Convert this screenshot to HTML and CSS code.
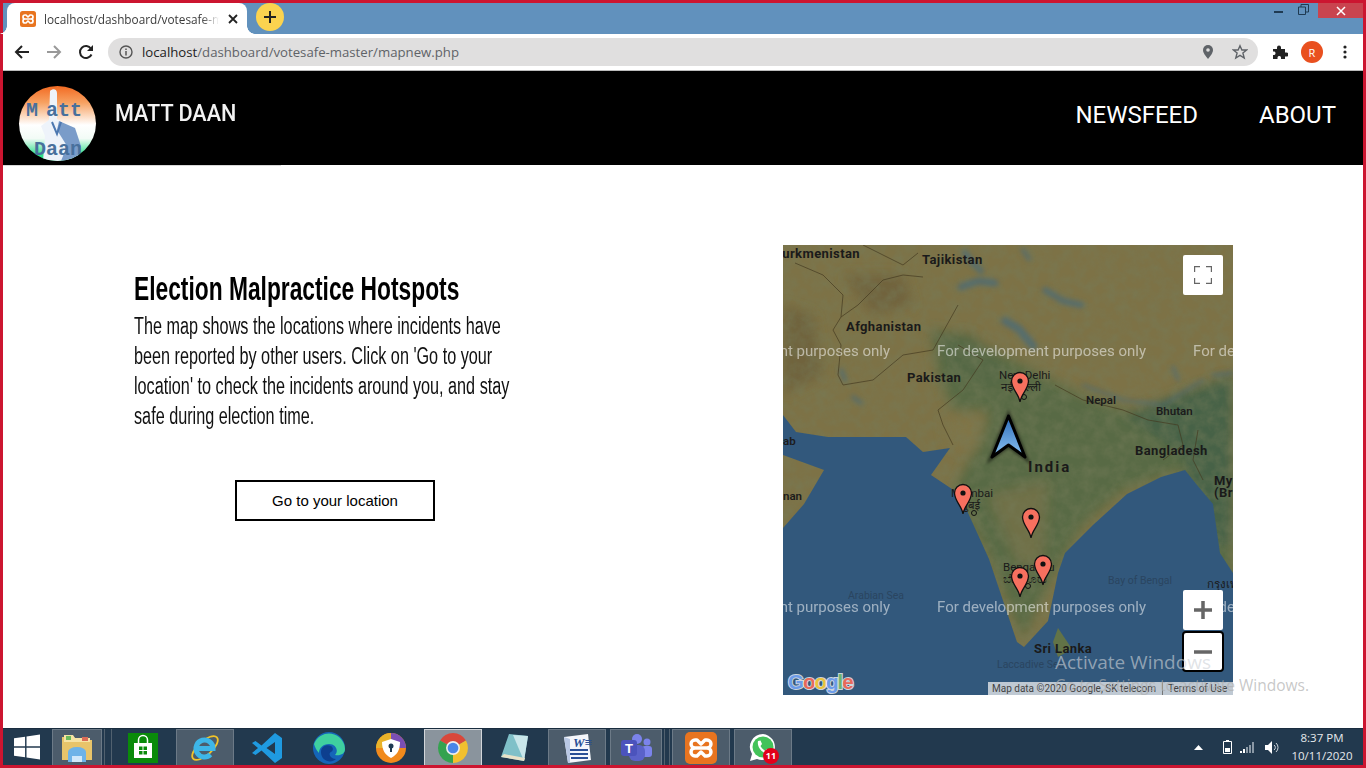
FILE: index.html
```html
<!DOCTYPE html>
<html lang="en">
<head>
<meta charset="utf-8">
<title>Matt Daan</title>
<link rel="stylesheet" href="styles.css">
</head>
<body>
<svg class="defs" width="0" height="0" aria-hidden="true">
  <symbol id="xampp" viewBox="0 0 16 16">
    <rect width="16" height="16" rx="2.5" fill="#e8741f"/>
    <path d="M8 8H5A2 2 0 0 1 5 4H6L8 6L10 4H11A2 2 0 0 1 11 8H8H5A2 2 0 0 0 5 12H6L8 10L10 12H11A2 2 0 0 0 11 8" fill="none" stroke="#fff" stroke-width="1.7" stroke-linejoin="round"/>
  </symbol>
</svg>
<div class="frame">
  <div class="tabstrip">
    <div class="tab">
      <svg class="favicon" width="16" height="16"><use href="#xampp"/></svg>
      <span class="tab-title">localhost/dashboard/votesafe-master/mapnew.php</span>
      <svg class="tab-close" width="10" height="10" viewBox="0 0 10 10"><path d="M1 1L9 9M9 1L1 9" stroke="#222" stroke-width="1.8"/></svg>
    </div>
    <div class="newtab"><svg width="14" height="14" viewBox="0 0 14 14"><path d="M7 1V13M1 7H13" stroke="#222" stroke-width="2"/></svg></div>
    <div class="winctl">
      <svg class="w-min" width="10" height="4"><rect y="1" width="9" height="2" fill="#1f3a52"/></svg>
      <svg class="w-max" width="11" height="11" viewBox="0 0 11 11"><path d="M.5 3H7.5V10.5H.5ZM3 3V.5H10.5V8H7.5" fill="none" stroke="#1f3a52"/></svg>
      <div class="w-close"><svg width="10" height="10" viewBox="0 0 10 10"><path d="M1 1L9 9M9 1L1 9" stroke="#fff" stroke-width="1.5"/></svg></div>
    </div>
  </div>
  <div class="toolbar">
    <svg class="tb-back" width="16" height="16" viewBox="0 0 16 16"><path d="M15 8H2M8 2L2 8L8 14" fill="none" stroke="#222" stroke-width="2"/></svg>
    <svg class="tb-fwd" width="16" height="16" viewBox="0 0 16 16"><path d="M1 8H14M8 2L14 8L8 14" fill="none" stroke="#999" stroke-width="2"/></svg>
    <svg class="tb-reload" width="16" height="16" viewBox="0 0 16 16"><path d="M13.5 10.5A6 6 0 1 1 13 4.7" fill="none" stroke="#222" stroke-width="2"/><path d="M15 1V7H9Z" fill="#222"/></svg>
    <div class="omnibox">
      <svg class="omni-info" width="14" height="14" viewBox="0 0 14 14"><circle cx="7" cy="7" r="6" fill="none" stroke="#555" stroke-width="1.4"/><path d="M7 6V10.500M7 3.400V5" stroke="#555" stroke-width="1.500"/></svg>
      <span class="url"><b>localhost</b>/dashboard/votesafe-master/mapnew.php</span>
      <svg class="omni-pin" width="12" height="16" viewBox="0 0 12 16"><path d="M6 1A5 5 0 0 0 1 6C1 9.500 6 15 6 15S11 9.500 11 6A5 5 0 0 0 6 1Z" fill="#5f6368"/><circle cx="6" cy="6" r="1.800" fill="#e0dfdf"/></svg>
      <svg class="omni-star" width="16" height="16" viewBox="0 0 16 16"><path d="M8 1.800L9.900 6H14.600L10.900 9L12.200 14L8 11.300L3.800 14L5.100 9L1.400 6H6.100Z" fill="none" stroke="#5f6368" stroke-width="1.400"/></svg>
    </div>
    <svg class="tb-ext" width="16" height="16" viewBox="0 0 16 16"><path d="M1 5H5V3.500A2 2 0 0 1 9 3.500V5H13V8.500H14.500A2 2 0 0 1 14.500 12.500H13V15H9V13.500A1.800 1.800 0 0 0 5.500 13.500V15H1V11H2.500A2 2 0 0 0 2.500 7.500H1Z" fill="#222"/></svg>
    <div class="avatar">R</div>
    <svg class="tb-menu" width="4" height="14" viewBox="0 0 4 14"><circle cx="2" cy="2" r="1.600" fill="#222"/><circle cx="2" cy="7" r="1.600" fill="#222"/><circle cx="2" cy="12" r="1.600" fill="#222"/></svg>
  </div>
  <header class="navbar">
    <div class="logo">
      <svg class="logo-hand" width="77" height="75" viewBox="0 0 77 75"><path d="M31 5C34 2 38 3 38 7L38 33L44 37L56 42L62 60L58 75H24L26 50L22 40L30 34Z" fill="#eef3fa"/><path d="M40 35L56 42L62 60L58 75H42L48 60L38 44Z" fill="#5d86bd" opacity=".8"/><path d="M33 36L38 48L42 36" fill="none" stroke="#4d78b0" stroke-width="2"/></svg>
      <span class="logo-top"><span class="logo-m">M</span>att</span>
      <span class="logo-bottom">Daan</span>
    </div>
    <div class="brand">MATT DAAN</div>
    <nav class="navlinks"><a>NEWSFEED</a><a>ABOUT</a></nav>
  </header>
  <div class="navline"></div>
  <main class="content">
    <section class="copy">
      <h1><span class="narrow-h">Election Malpractice Hotspots</span></h1>
      <p><span class="narrow-p">The map shows the locations where incidents have</span><br><span class="narrow-p">been reported by other users. Click on 'Go to your</span><br><span class="narrow-p">location' to check the incidents around you, and stay</span><br><span class="narrow-p">safe during election time.</span></p>
      <button class="locate">Go to your location</button>
    </section>
    <section class="map">
      <svg class="map-canvas" width="450" height="450" viewBox="0 0 450 450">
        <defs>
          <filter id="b4" x="-20%" y="-20%" width="140%" height="140%"><feGaussianBlur stdDeviation="6"/></filter>
          <filter id="b1" x="-20%" y="-20%" width="140%" height="140%"><feGaussianBlur stdDeviation="1.500"/></filter>
          <filter id="b3" x="-20%" y="-20%" width="140%" height="140%"><feGaussianBlur stdDeviation="2.500"/></filter>
          <filter id="b05" x="-5%" y="-5%" width="110%" height="110%"><feGaussianBlur stdDeviation=".6"/></filter>
          <filter id="noise"><feTurbulence type="fractalNoise" baseFrequency=".09" numOctaves="4" seed="7"/><feColorMatrix values="0 0 0 0 .18  0 0 0 0 .2  0 0 0 0 .1  1.600 0 0 0 -.5"/></filter>
          <linearGradient id="arrowfill" x1="0" y1="0" x2="0" y2="1"><stop offset="0" stop-color="#2d6cba"/><stop offset="1" stop-color="#8cc4f2"/></linearGradient>
          <symbol id="pin" viewBox="0 0 20 32" overflow="visible">
            <path d="M10 31C9 23 1.500 18 1.500 10A8.500 8.500 0 0 1 18.500 10C18.500 18 11 23 10 31Z" fill="#f7705f" stroke="#111" stroke-width="1.300"/>
            <circle cx="10" cy="10" r="2.600" fill="#111"/>
          </symbol>
        </defs>
        <rect width="450" height="450" fill="#7d7246"/>
        <g filter="url(#b4)">
          <path d="M150 95L200 100L250 125L300 150L370 175L450 180V340H410L400 225L340 245L300 280L270 330L240 395L205 310L170 245L195 200L205 165L170 165L155 130Z" fill="#586a45"/>
          <path d="M340 170L450 130V300L420 300L400 210Z" fill="#466246"/>
          <path d="M145 85L190 90L225 130L205 140L170 125Z" fill="#546844"/>
          <path d="M160 175L205 170L195 205L165 200Z" fill="#807447"/>
          <path d="M205 250L265 235L260 320L235 320Z" fill="#6f6f46"/>
          <path d="M0 60L30 70L40 130L0 150Z" fill="#6f643c"/>
          <path d="M60 30L120 30L130 60L90 70Z" fill="#71643c"/>
        </g>
        <rect width="450" height="450" filter="url(#noise)" opacity=".55"/>
        <g filter="url(#b3)" fill="none" stroke="#4a6a78" stroke-linecap="round" stroke-linejoin="round" opacity=".75">
          <path d="M178 42L195 36L212 38" stroke-width="7"/>
          <path d="M222 76L236 84L250 101" stroke-width="8"/>
          <path d="M262 45L280 56L298 60" stroke-width="6"/>
          <path d="M182 8L190 18L198 26" stroke-width="6"/>
          <path d="M240 5L246 14" stroke-width="4"/>
          <path d="M300 140L340 155L380 160L420 135" stroke-width="2.500"/>
          <path d="M58 125L62 135M70 152L78 158" stroke-width="4"/>
          <path d="M390 122L395 135M430 130L450 128" stroke-width="3"/>
        </g>
        <path d="M0 170L13 187L45 192L123 192L140 207L167 203L148 230L172 246L181 259L206 314L234 397L241 402L265 376L275 328L282 308L310 280L344 249L378 232L402 225L414 240L430 259L437 308L450 328V450H0V283L21 259L41 225L0 210Z" fill="#33597b" filter="url(#b05)"/>
        <path d="M275 383L289 404L275 412L270 397Z" fill="#627347" filter="url(#b05)"/>
        <g fill="none" stroke="#43391f" stroke-width=".9" opacity=".75">
          <path d="M12 18L40 30L60 50L58 72L75 60L100 35L120 30L140 32"/>
          <path d="M58 72L50 85L58 100L55 130L60 140L90 135L120 110L150 105L175 60"/>
          <path d="M175 100L200 115L180 145L155 165L160 180L170 200"/>
          <path d="M272 140L300 155L340 165L365 175"/>
          <path d="M365 175L395 180L400 200L380 215M415 185L410 215L420 235"/>
          <path d="M80 0L120 20L135 8"/>
        </g>
        <g class="ml-main">
          <text x="77" y="13" text-anchor="end">urkmenistan</text>
          <text x="139" y="19">Tajikistan</text>
          <text x="63" y="86">Afghanistan</text>
          <text x="124" y="137">Pakistan</text>
          <text x="352" y="210">Bangladesh</text>
          <text x="251" y="408">Sri Lanka</text>
          <text x="431" y="240">My</text>
          <text x="431" y="252">(Br</text>
          <text x="245" y="227" class="ml-india">India</text>
        </g>
        <g class="ml-mid">
          <text x="303" y="159">Nepal</text>
          <text x="373" y="170">Bhutan</text>
          <text x="0" y="255">nan</text>
          <text x="0" y="200">ab</text>
        </g>
        <g class="ml-city">
          <text x="216" y="134">New Delhi</text>
          <text x="218" y="146">नई दिल्ली</text>
          <text x="168" y="252">Mumbai</text>
          <text x="178" y="264">मुंबई</text>
          <text x="220" y="326">Bengaluru</text>
          <text x="220" y="338">ಬೆಂಗಳೂರು</text>
          <text x="424" y="343">กรุงเทพ</text>
        </g>
        <g class="ml-sea">
          <text x="65" y="354">Arabian Sea</text>
          <text x="325" y="339">Bay of Bengal</text>
          <text x="214" y="423">Laccadive Sea</text>
        </g>
        <g class="ml-wm">
          <text x="-102" y="111">For development purposes only</text>
          <text x="154" y="111">For development purposes only</text>
          <text x="410" y="111">For development purposes only</text>
          <text x="-102" y="367">For development purposes only</text>
          <text x="154" y="367">For development purposes only</text>
          <text x="410" y="367">For development purposes only</text>
        </g>
        <circle cx="191" cy="268" r="2.500" fill="none" stroke="#111"/>
        <circle cx="241" cy="152" r="2.500" fill="none" stroke="#111"/>
        <circle cx="245" cy="341" r="2.500" fill="none" stroke="#111"/>
        <use href="#pin" x="227" y="126" width="20" height="32"/>
        <use href="#pin" x="170" y="238" width="20" height="32"/>
        <use href="#pin" x="238" y="262" width="20" height="32"/>
        <use href="#pin" x="250" y="309" width="20" height="32"/>
        <use href="#pin" x="227" y="321" width="20" height="32"/>
        <path d="M225.500 171L209 212L225.500 200L242 212Z" fill="#000" opacity=".5" filter="url(#b1)" stroke="#000" stroke-width="5"/>
        <path d="M225.500 171L209 212L225.500 200L242 212Z" fill="url(#arrowfill)" stroke="#000" stroke-width="3" stroke-linejoin="round"/>
        <text class="g-logo" x="5" y="444"><tspan fill="#6c9be8">G</tspan><tspan fill="#e8695a">o</tspan><tspan fill="#e9c33f">o</tspan><tspan fill="#6c9be8">g</tspan><tspan fill="#6fb56c">l</tspan><tspan fill="#e8695a">e</tspan></text>
      </svg>
      <div class="map-btn fullscreen"><svg width="18" height="18" viewBox="0 0 18 18"><path d="M0 6V0H6M12 0H18V6M18 12V18H12M6 18H0V12" fill="none" stroke="#666" stroke-width="2.400"/></svg></div>
      <div class="map-btn zoom-in"><svg width="18" height="18" viewBox="0 0 18 18"><path d="M9 0V18M0 9H18" stroke="#666" stroke-width="3.500"/></svg></div>
      <div class="map-btn zoom-out"><svg width="18" height="4" viewBox="0 0 18 4"><path d="M0 2H18" stroke="#666" stroke-width="3.500"/></svg></div>
      <div class="attrib"><span>Map data ©2020 Google, SK telecom</span><span class="attrib-terms">Terms of Use</span></div>
    </section>
  </main>
  <footer class="taskbar">
    <div class="start"><svg width="26" height="26" viewBox="0 0 27 27"><path d="M0 4.500L11.500 2.800V12.800H0ZM13 2.600L27 .5V12.800H13ZM0 14.200H11.500V24.200L0 22.500ZM13 14.200H27V26.500L13 24.400Z" fill="#fff"/></svg></div>
    <div class="tb-item tb-pin t-exp"><svg width="32" height="30" viewBox="0 0 32 30"><path d="M1 4H13L15 7H31V27H1Z" fill="#e8c46a"/><path d="M3 2H12L14 5H29V9H3Z" fill="#f6e3a4"/><rect x="5" y="3" width="5" height="4" fill="#6dbb5b"/><rect x="21" y="4" width="6" height="4" fill="#d96c56"/><path d="M7 19A9 5 0 0 1 25 19V29H21V23H11V29H7Z" fill="#6db3e8"/><rect x="11" y="23" width="10" height="6" fill="#cfe8fa"/></svg></div>
    <div class="tb-sep"></div>
    <div class="tb-item t-store"><svg width="30" height="30" viewBox="0 0 30 30"><rect width="30" height="30" fill="#0a8a0a"/><path d="M6 10H24V25H6Z" fill="#fff"/><path d="M10.500 10V7A4.500 4.500 0 0 1 19.500 7V10" fill="none" stroke="#fff" stroke-width="1.500"/><path d="M11 13.500H14.500V17H11ZM15.500 13.500H19V17H15.500ZM11 18H14.500V21.500H11ZM15.500 18H19V21.500H15.500Z" fill="#0a8a0a"/></svg></div>
    <div class="tb-item tb-pin t-ie"><svg width="32" height="32" viewBox="0 0 32 32"><ellipse cx="16" cy="16" rx="16" ry="7" transform="rotate(-42 16 16)" fill="none" stroke="#f2c428" stroke-width="1.800"/><path d="M8 16.500H24A8.500 8.500 0 1 0 21.500 22.500" fill="none" stroke="#3db6e8" stroke-width="5"/></svg></div>
    <div class="tb-item t-vsc"><svg width="32" height="32" viewBox="0 0 32 32"><path fill-rule="evenodd" d="M31 6L24 1L10.500 13.500L4.500 9L1 11L7 16L1 21L4.500 23L10.500 18.500L24 31L31 26ZM24 10V22L15.500 16Z" fill="#1f9ae0"/></svg></div>
    <div class="tb-item t-edge"><svg width="32" height="32" viewBox="0 0 32 32"><circle cx="16" cy="16" r="16" fill="#1565b8"/><path d="M1 12A16 16 0 0 1 32 17C32 22 27 24 22 23C26 19 23 12 16 12C10 12 6 16 6 21C3 18 2 15 1 12Z" fill="#3fcf9f"/><path d="M8 20C8 14 14 12 18 14C21 16 20 19 18 20C15 21 17 27 23 27C18 32 8 29 8 20Z" fill="#0d3f8f"/></svg></div>
    <div class="tb-item t-avast"><svg width="30" height="32" viewBox="0 0 30 32"><circle cx="15" cy="16" r="15" fill="#f18a1c"/><path d="M15 1A15 15 0 0 1 30 16H15Z" fill="#7a4fb5"/><path d="M0 16A15 15 0 0 1 15 1L15 16Z" fill="#e9b32a"/><path d="M15 7L24 10C24 18 21 23 15 26C9 23 6 18 6 10Z" fill="#fff"/><circle cx="15" cy="14" r="2.500" fill="#1f3a52"/><rect x="14" y="15" width="2" height="5" fill="#1f3a52"/></svg></div>
    <div class="tb-item tb-pin tb-active t-chrome"><svg width="30" height="30" viewBox="0 0 28 28"><path d="M14 14L1.900 7A14 14 0 0 1 26.100 7Z" fill="#d9483b"/><path d="M14 14L26.100 7A14 14 0 0 1 14 28Z" fill="#f2c02e"/><path d="M14 14L14 28A14 14 0 0 1 1.900 7Z" fill="#34a24f"/><circle cx="14" cy="14" r="6.500" fill="#eee"/><circle cx="14" cy="14" r="5" fill="#4a86e8"/></svg></div>
    <div class="tb-item t-note"><svg width="30" height="30" viewBox="0 0 30 30"><path d="M9 1L28 3L24 28L1 24Z" fill="#7fc0c8"/><path d="M13 2L28 3L24 28Z" fill="#c9e6ea"/><path d="M1 24L24 28L25 25L4 21Z" fill="#e8e2c8"/></svg></div>
    <div class="tb-item tb-pin t-word"><svg width="30" height="30" viewBox="0 0 30 30"><path d="M2 4L26 1L29 27L6 30Z" fill="#f4f6fb"/><text x="11" y="14" class="word-w">W≡</text><path d="M8 17H26M8 21H26M9 25H26" stroke="#2a4f96" stroke-width="2"/><path d="M2 4L8 6V30L6 30Z" fill="#b9c8e4"/></svg></div>
    <div class="tb-item tb-pin t-teams"><svg width="32" height="30" viewBox="0 0 32 30"><circle cx="27" cy="9" r="3.500" fill="#7b83eb"/><rect x="22" y="13" width="10" height="11" rx="3" fill="#7b83eb"/><circle cx="17" cy="6" r="5" fill="#7b83eb"/><rect x="9" y="12" width="16" height="16" rx="6" fill="#5a62c9"/><rect x="1" y="7" width="16" height="16" rx="3" fill="#4b53bc"/><text x="5" y="20" class="teams-t">T</text></svg></div>
    <div class="tb-sep tb-sep2"></div>
    <div class="tb-item tb-pin t-xampp"><svg width="32" height="32"><use href="#xampp"/></svg></div>
    <div class="tb-item tb-pin t-wa"><svg width="30" height="32" viewBox="0 0 30 32"><path d="M15 2A13 13 0 0 0 4 22L2 29L9 27A13 13 0 1 0 15 2Z" fill="#fff"/><circle cx="15" cy="15" r="10.500" fill="#43c35a"/><path d="M10 9L12.500 8.500L14 12L12.500 14C13.500 16 15 17.500 17 18.500L19 17L22 19L21 21.500C16 23 8.500 16 10 9Z" fill="#fff"/></svg><span class="badge">11</span></div>
    <div class="tray">
      <svg width="9" height="5" viewBox="0 0 9 5"><path d="M0 5L4.500 0L9 5Z" fill="#fff"/></svg>
      <svg class="t-batt" width="9" height="14" viewBox="0 0 9 14"><path d="M.5 1.500H8.500V13.500H.5Z" fill="none" stroke="#fff"/><rect x="3" width="3" height="1.500" fill="#fff"/><rect x="2" y="8" width="5" height="4" fill="#fff"/></svg>
      <svg class="t-sig" width="15" height="11" viewBox="0 0 15 11"><path d="M0 9H2V11H0ZM3 7H5V11H3Z" fill="#fff"/><path d="M6 5H8V11H6ZM9 3H11V11H9ZM12 0H14V11H12Z" fill="#8a98a5"/></svg>
      <svg class="t-vol" width="15" height="13" viewBox="0 0 15 13"><path d="M0 4H3L7 0V13L3 9H0Z" fill="#fff"/><path d="M9 4A3 3 0 0 1 9 9M11 2A6 6 0 0 1 11 11" fill="none" stroke="#cfd6dc"/></svg>
      <div class="clock"><span>8:37 PM</span><span>10/11/2020</span></div>
    </div>
  </footer>
  <div class="activate">
    <div class="act-1">Activate Windows</div>
    <div class="act-2">Go to Settings to activate Windows.</div>
  </div>
</div>
</body>
</html>
```
FILE: styles.css
```css
* { box-sizing: border-box; }
html, body { margin: 0; padding: 0; }
body { width: 1366px; height: 768px; overflow: hidden; background: #fff; font-family: "Open Sans", "Liberation Sans", sans-serif; }
.defs { position: absolute; }
.frame { position: relative; width: 1366px; height: 768px; border: 3px solid #cc1530; display: flex; flex-direction: column; }

.tabstrip { height: 31px; background: #6191bd; display: flex; align-items: flex-start; flex: none; }
.tab { width: 240px; height: 31px; margin-left: 4px; background: #fff; border-radius: 8px 8px 0 0; display: flex; align-items: center; padding: 0 0 0 13px; flex: none; position: relative; }
.tab::before, .tab::after { content: ""; position: absolute; bottom: 0; width: 8px; height: 8px; }
.tab::before { right: 100%; background: radial-gradient(circle at 0 0, transparent 7.5px, #fff 8px); }
.tab::after { left: 100%; background: radial-gradient(circle at 100% 0, transparent 7.5px, #fff 8px); }
.favicon { flex: none; margin-right: 8px; }
.tab-title { width: 175px; overflow: hidden; white-space: nowrap; font-size: 11.8px; color: #3a3a3a; -webkit-mask-image: linear-gradient(90deg, #000 90%, transparent); mask-image: linear-gradient(90deg, #000 90%, transparent); }
.tab-close { margin-left: 9px; flex: none; }
.newtab { width: 28px; height: 28px; margin: 0 0 0 9px; border-radius: 50%; background: #fbd34f; display: flex; align-items: center; justify-content: center; flex: none; }
.winctl { margin-left: auto; display: flex; align-items: flex-start; flex: none; }
.w-min { margin: 7px 14px 0 0; }
.w-max { margin: 1px 9px 0 0; }
.w-close { width: 45px; height: 15px; background: #c9444f; display: flex; align-items: center; justify-content: center; }

.toolbar { height: 36px; background: #fff; display: flex; align-items: center; flex: none; padding-left: 11px; }
.tb-back { margin-right: 16px; flex: none; }
.tb-fwd { margin-right: 16px; flex: none; }
.tb-reload { margin-right: 14px; flex: none; }
.omnibox { width: 1150px; height: 28px; border-radius: 14px; background: #e0dfdf; display: flex; align-items: center; padding-left: 11px; flex: none; }
.omni-info { flex: none; }
.url { margin-left: 9px; font-size: 13.2px; color: #5f6368; white-space: nowrap; width: 1060px; flex: none; }
.url b { font-weight: 400; color: #222; }
.omni-pin { flex: none; }
.omni-star { margin-left: 18px; flex: none; }
.tb-ext { margin-left: 14px; flex: none; }
.avatar { width: 22px; height: 22px; margin-left: 13px; border-radius: 50%; background: #e9501f; color: #fff; font-size: 11px; display: flex; align-items: center; justify-content: center; flex: none; }
.tb-menu { margin-left: 20px; flex: none; }

.navbar { height: 95px; background: #000; border-top: 1px solid #bbb; display: flex; align-items: center; flex: none; padding-left: 16px; padding-right: 27px; }
.logo { width: 77px; height: 75px; margin-top: 10px; border-radius: 50%; position: relative; overflow: hidden; flex: none; background: linear-gradient(180deg, #f26a22 0%, #f7a161 22%, #fff 52%, #f2fbf6 70%, #2fe08b 92%); font-family: "Liberation Mono", monospace; color: #48709c; }
.logo-hand { position: absolute; left: 0; top: 0; }
.logo-top { position: absolute; left: 7px; top: 13px; font-size: 20px; font-weight: 700; white-space: nowrap; }
.logo-m { margin-right: 8px; }
.logo-bottom { position: absolute; left: 15px; top: 52px; font-size: 20px; font-weight: 700; white-space: nowrap; }
.brand { margin-left: 19px; margin-top: -11px; color: #f2f2f2; font-size: 24px; font-weight: 500; font-family: Roboto, "Open Sans", sans-serif; white-space: nowrap; transform: scaleX(.9); transform-origin: 0 50%; }
.navlinks { margin-left: auto; margin-top: -6px; display: flex; gap: 61px; }
.navlinks a { color: #fff; font-size: 24px; font-family: Roboto, "Open Sans", sans-serif; white-space: nowrap; }

.navline { width: 278px; height: 1px; background: #d8d8d8; flex: none; }
.content { flex: 1; min-height: 0; display: flex; justify-content: space-between; padding: 79px 130px 0 131px; background: #fff; }
.copy { width: 402px; padding-top: 25px; }
h1 { margin: 0; font-family: "Liberation Sans", sans-serif; font-size: 34px; line-height: 36px; font-weight: 700; color: #000; white-space: nowrap; }
.narrow-h { display: inline-block; transform: scaleX(.67); transform-origin: 0 50%; }
.copy p { margin: 5px 0 0; font-family: "Liberation Sans", sans-serif; font-size: 23px; line-height: 30px; color: #111; white-space: nowrap; }
.narrow-p { display: inline-block; transform: scaleX(.705); transform-origin: 0 50%; }
.locate { display: block; margin: 49px auto 0; width: 200px; height: 41px; border: 2px solid #000; background: #fff; font-family: "Liberation Sans", Arial, sans-serif; font-size: 15px; color: #000; padding: 0; }

.map { position: relative; width: 450px; height: 450px; flex: none; overflow: visible; }
.map-canvas { display: block; }
.map-canvas text { font-family: Roboto, "Noto Sans", "Liberation Sans", sans-serif; }
.ml-main { font-size: 13px; font-weight: 700; fill: #1a1a1a; letter-spacing: .4px; }
.ml-india { font-size: 15px; letter-spacing: 2px; }
.ml-mid { font-size: 11.500px; font-weight: 600; fill: #1c1c1c; }
.ml-city { font-size: 11.500px; fill: #1a1a1a; }
.ml-sea { font-size: 10.500px; fill: #2a4560; }
.map-canvas .ml-wm { font-family: "Liberation Sans", sans-serif; font-size: 15px; fill: #fff; opacity: .52; }
.map-canvas .g-logo { font-family: "Liberation Sans", sans-serif; font-size: 20.500px; font-weight: 700; stroke: #fff; stroke-width: 2px; paint-order: stroke; stroke-opacity: .75; letter-spacing: -1px; }
.map-btn { position: absolute; left: 400px; width: 40px; background: #fff; display: flex; align-items: center; justify-content: center; border-radius: 2px; }
.fullscreen { top: 10px; height: 40px; }
.zoom-in { top: 345px; height: 40px; }
.zoom-out { top: 386px; height: 41px; border: 2px solid #000; border-radius: 4px; left: 399px; width: 42px; }
.attrib { position: absolute; right: 0; bottom: 0; width: 245px; height: 13px; background: rgba(245,245,245,.72); font-family: Roboto, "Liberation Sans", sans-serif; font-size: 10px; line-height: 13px; color: #444; padding-left: 4px; white-space: nowrap; display: flex; }
.attrib-terms { margin-left: 6px; padding-left: 5px; border-left: 1px solid #777; }

.taskbar { height: 37px; background: #22394e; display: flex; align-items: stretch; flex: none; border-top: 1px solid #1a2d3f; }
.start { width: 47px; display: flex; align-items: center; justify-content: center; flex: none; }
.tb-item { width: 62px; display: flex; align-items: center; justify-content: center; flex: none; position: relative; padding-top: 1px; }
.tb-pin::before { content: ""; position: absolute; left: 2px; right: 2px; top: 0; bottom: 0; background: #4c5c6b; border: 1px solid #6c7a87; border-bottom: 0; z-index: 0; }
.tb-item svg { position: relative; z-index: 1; }
.tb-active::before { background: #8a949d; border-color: #d2d6da; }
.t-exp { width: 54px; }
.tb-sep { width: 8px; flex: none; border-left: 1px solid #51616f; border-right: 1px solid #51616f; }
.t-teams { width: 56px; }
.tb-sep2 { width: 6px; }
.word-w { font-family: "Liberation Serif", serif; font-size: 13px; font-weight: 700; font-style: italic; fill: #2a4f96; }
.teams-t { font-family: "Liberation Sans", sans-serif; font-size: 13px; font-weight: 700; fill: #fff; }
.badge { position: absolute; z-index: 2; left: 31px; top: 19px; width: 16px; height: 16px; border-radius: 50%; background: #e2001a; color: #fff; font-size: 9px; font-weight: 700; text-align: center; line-height: 16px; }
.tray { margin-left: auto; display: flex; align-items: center; padding-right: 8px; color: #e6e9ec; }
.t-batt { margin-left: 20px; }
.t-sig { margin-left: 8px; }
.t-vol { margin-left: 10px; }
.clock { margin-left: 9px; width: 66px; display: flex; flex-direction: column; align-items: center; font-size: 11.5px; line-height: 18px; font-family: "Open Sans", sans-serif; white-space: nowrap; }

.activate { position: absolute; left: 1052px; top: 646px; pointer-events: none; }
.act-1 { font-size: 19px; line-height: 26px; color: rgba(205,210,215,.62); }
.act-2 { font-size: 15.500px; line-height: 20px; color: rgba(175,175,175,.7); white-space: nowrap; }
```
